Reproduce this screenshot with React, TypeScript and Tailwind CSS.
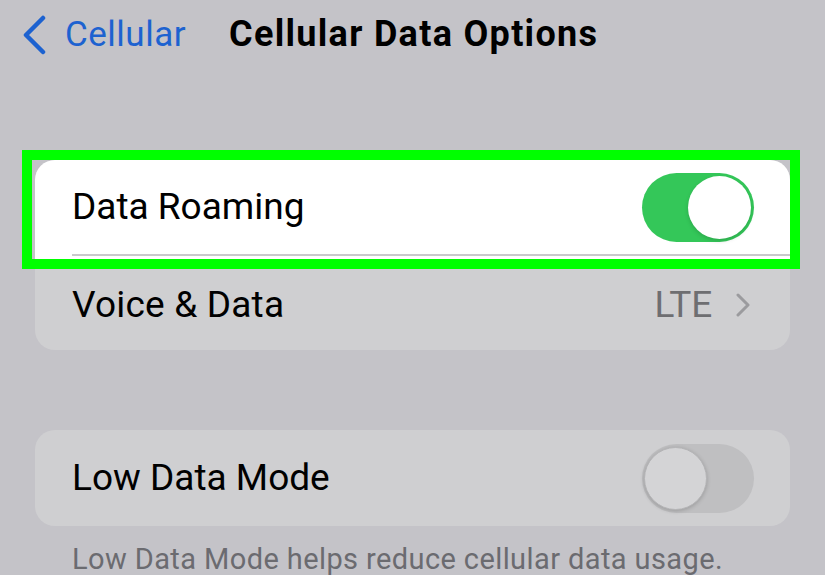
export default function App() {
  return (
    <div className="w-[825px] h-[575px] overflow-hidden bg-[#c4c3c8] font-['Roboto',sans-serif] text-black">
      {/* nav bar */}
      <div className="h-[68px] flex items-center pl-[22px]">
        <svg width="24" height="40" viewBox="0 0 24 40" className="mt-[1px]">
          <path d="M21 3 L4 20 L21 37" fill="none" stroke="#1d62d0" strokeWidth="4.5" strokeLinecap="round" strokeLinejoin="round" />
        </svg>
        <span className="ml-[19px] text-[35px] leading-none text-[#1d62d0] tracking-[0.5px]">Cellular</span>
        <span className="ml-[43px] text-[36px] leading-none font-bold tracking-[1.3px]">Cellular Data Options</span>
      </div>

      {/* roaming group */}
      <div className="relative mx-[35px] mt-[92px] rounded-[20px] bg-[#cfcfd1]">
        <div className="bg-white rounded-t-[20px] pl-[37px] pb-[3px]">
          <div className="h-[96px] flex items-center justify-between pr-[36px] border-b-2 border-[#c9c9cb]">
            <span className="text-[37px]">Data Roaming</span>
            <div className="relative w-[112px] h-[69px] rounded-full bg-[#34c759]">
              <div className="absolute right-[3px] top-[3px] w-[63px] h-[63px] rounded-full bg-white shadow-[0_2px_4px_rgba(0,0,0,0.15)]" />
            </div>
          </div>
        </div>
        <div className="h-[91px] flex items-center justify-between pl-[37px] pr-[40px]">
          <span className="text-[37px] tracking-[0.2px]">Voice &amp; Data</span>
          <div className="flex items-center">
            <span className="text-[37px] tracking-[-0.2px] text-[#6e6e71]">LTE</span>
            <svg width="14" height="24" viewBox="0 0 14 24" className="ml-[24px]">
              <path d="M2 2 L12 12 L2 22" fill="none" stroke="#9b9b9e" strokeWidth="3" strokeLinecap="round" strokeLinejoin="round" />
            </svg>
          </div>
        </div>
        <div className="absolute left-[-13px] right-[-10px] top-[-10px] h-[119px] border-[10px] border-[#00ff00] pointer-events-none" />
      </div>

      {/* low data group */}
      <div className="mx-[35px] mt-[80px] h-[96px] rounded-[20px] bg-[#cfcfd1] flex items-center justify-between pl-[37px] pr-[36px]">
        <span className="text-[37px]">Low Data Mode</span>
        <div className="relative w-[112px] h-[69px] rounded-full bg-[#bfbfc1]">
          <div className="absolute left-[2px] top-[3px] w-[63px] h-[63px] rounded-full bg-[#d4d4d6] border border-[#b4b4b6] shadow-[0_1px_4px_rgba(0,0,0,0.2)]" />
        </div>
      </div>
      <p className="mt-[16px] pl-[72px] text-[29px] leading-[34px] text-[#6b6b70] tracking-[0.4px]">
        Low Data Mode helps reduce cellular data usage.
      </p>
    </div>
  )
}
